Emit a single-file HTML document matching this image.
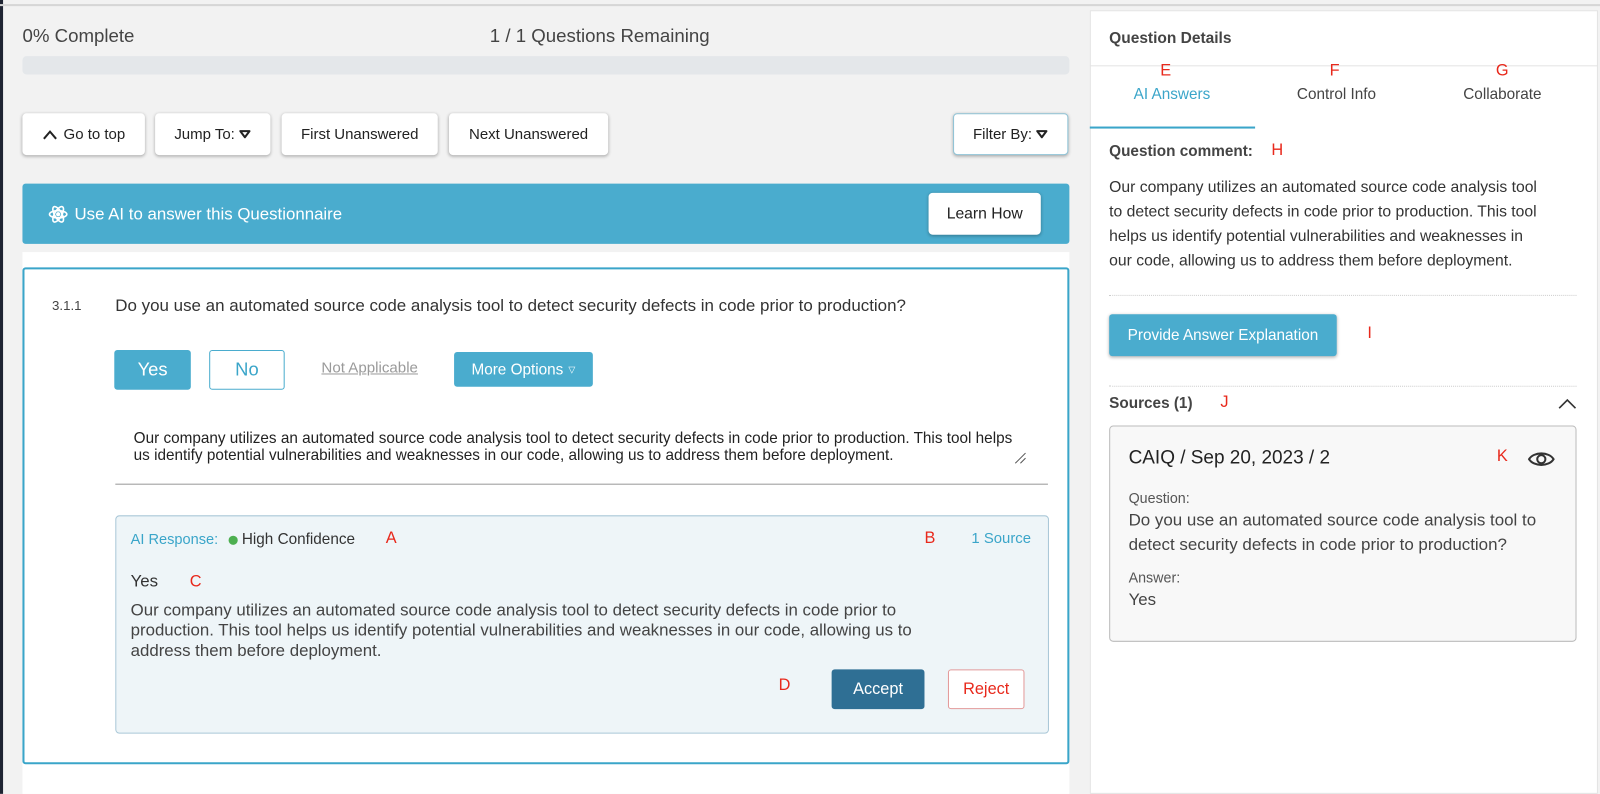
<!DOCTYPE html>
<html><head><meta charset="utf-8"><style>
*{box-sizing:border-box;margin:0;padding:0}
body{width:1600px;height:778px;background:#f2f2f2;font-family:"Liberation Sans",Arial,sans-serif;color:#333;position:relative;overflow:hidden}
#w{position:absolute;left:0;top:0;width:1568px;height:763px;transform:scale(1.0204);transform-origin:0 0}
.a{position:absolute;white-space:nowrap}
.btn{position:absolute;background:#fff;border-radius:4px;box-shadow:0 1px 3px rgba(0,0,0,.3);font-size:14.7px;color:#222;display:flex;align-items:center;justify-content:center}
.red{color:#e8291c;position:absolute;font-size:16px}
</style></head><body>
<div id="w">
<div class="a" style="left:0;top:0;width:3px;height:778px;background:#1f2533"></div>
<div class="a" style="left:0;top:4px;width:1600px;height:2px;background:#d6d6d6"></div>

<div class="a" style="left:22px;top:24px;font-size:18.3px;color:#444">0% Complete</div>
<div class="a" style="left:480px;top:24px;font-size:18.3px;color:#444">1 / 1 Questions Remaining</div>
<div class="a" style="left:22px;top:55px;width:1026px;height:18px;background:#e4e7ea;border-radius:4px"></div>

<div class="btn" style="left:22px;top:111px;width:120px;height:41px"><svg width="16" height="12" viewBox="0 0 16 12" style="margin-right:5px"><path d="M2 10 L8 3 L14 10" fill="none" stroke="#222" stroke-width="2"/></svg>Go to top</div>
<div class="btn" style="left:152px;top:111px;width:113px;height:41px">Jump To:<svg width="12" height="9" viewBox="0 0 12 9" style="margin-left:4px"><path d="M1.5 1.5 H10.5 L6 7.5Z" fill="none" stroke="#222" stroke-width="2" stroke-linejoin="round"/></svg></div>
<div class="btn" style="left:276px;top:111px;width:153px;height:41px">First Unanswered</div>
<div class="btn" style="left:440px;top:111px;width:156px;height:41px">Next Unanswered</div>
<div class="btn" style="left:934px;top:111px;width:113px;height:41px;border:1px solid #8fc3d6">Filter By:<svg width="12" height="9" viewBox="0 0 12 9" style="margin-left:4px"><path d="M1.5 1.5 H10.5 L6 7.5Z" fill="none" stroke="#222" stroke-width="2" stroke-linejoin="round"/></svg></div>

<div class="a" style="left:22px;top:180px;width:1026px;height:59px;background:#4aacce;border-radius:3px"></div>
<svg class="a" style="left:47px;top:200px" width="20" height="20" viewBox="0 0 20 20" fill="none" stroke="#fff" stroke-width="1.6"><ellipse cx="10" cy="10" rx="8.5" ry="3.5"/><ellipse cx="10" cy="10" rx="8.5" ry="3.5" transform="rotate(60 10 10)"/><ellipse cx="10" cy="10" rx="8.5" ry="3.5" transform="rotate(120 10 10)"/><circle cx="10" cy="10" r="1.3" fill="#fff"/></svg>
<div class="a" style="left:73px;top:201px;font-size:16.5px;color:#fff">Use AI to answer this Questionnaire</div>
<div class="btn" style="left:910px;top:189px;width:110px;height:41px;font-size:15.4px">Learn How</div>

<div class="a" style="left:22px;top:247px;width:1026px;height:531px;background:#fff"></div>
<div class="a" style="left:22px;top:262px;width:1026px;height:487px;border:2px solid #3aa5c9;border-radius:3px;background:#fff"></div>
<div class="a" style="left:51px;top:292px;font-size:13px;color:#444">3.1.1</div>
<div class="a" style="left:113px;top:290px;font-size:16.6px;color:#333">Do you use an automated source code analysis tool to detect security defects in code prior to production?</div>

<div class="a" style="left:112px;top:343px;width:75px;height:39px;background:#4aacce;border-radius:3px;color:#fff;font-size:18px;display:flex;align-items:center;justify-content:center">Yes</div>
<div class="a" style="left:205px;top:343px;width:74px;height:39px;border:1px solid #4aacce;border-radius:3px;color:#3aa5c9;font-size:18px;display:flex;align-items:center;justify-content:center">No</div>
<div class="a" style="left:315px;top:353px;font-size:14.8px;color:#9a9a9a;text-decoration:underline">Not Applicable</div>
<div class="a" style="left:445px;top:345px;width:136px;height:34px;background:#4aacce;border-radius:3px;color:#fff;font-size:15px;display:flex;align-items:center;justify-content:center">More Options <span style="font-size:9px;margin-left:5px">▽</span></div>

<div class="a" style="left:131px;top:421px;font-size:15px;color:#222;line-height:17px">Our company utilizes an automated source code analysis tool to detect security defects in code prior to production. This tool helps<br>us identify potential vulnerabilities and weaknesses in our code, allowing us to address them before deployment.</div>
<svg class="a" style="left:994px;top:443px" width="12" height="12"><path d="M1 11 L11 1 M6 11 L11 6" stroke="#555" stroke-width="1"/></svg>
<div class="a" style="left:113px;top:474px;width:914px;height:1px;background:#999"></div>

<div class="a" style="left:113px;top:505px;width:915px;height:214px;background:#eef5f8;border:1px solid #a9c7d7;border-radius:4px"></div>
<div class="a" style="left:128px;top:521px;font-size:14.3px;color:#3aa5c9">AI Response:</div>
<div class="a" style="left:224px;top:525px;width:9px;height:9px;border-radius:50%;background:#4caf50"></div>
<div class="a" style="left:237px;top:520px;font-size:15px;color:#333">High Confidence</div>
<div class="red" style="left:378px;top:519px">A</div>
<div class="red" style="left:906px;top:519px">B</div>
<div class="a" style="left:952px;top:520px;font-size:14.6px;color:#3aa5c9">1 Source</div>
<div class="a" style="left:128px;top:561px;font-size:16.5px;color:#333">Yes</div>
<div class="red" style="left:186px;top:562px">C</div>
<div class="a" style="left:128px;top:588px;font-size:16.5px;color:#444;line-height:20px">Our company utilizes an automated source code analysis tool to detect security defects in code prior to<br>production. This tool helps us identify potential vulnerabilities and weaknesses in our code, allowing us to<br>address them before deployment.</div>
<div class="red" style="left:763px;top:663px">D</div>
<div class="a" style="left:815px;top:656px;width:91px;height:39px;background:#2f6f94;border-radius:3px;color:#fff;font-size:16px;display:flex;align-items:center;justify-content:center">Accept</div>
<div class="a" style="left:929px;top:656px;width:75px;height:39px;background:#fff;border:1px solid #e39a9a;border-radius:3px;color:#e8291c;font-size:16px;display:flex;align-items:center;justify-content:center">Reject</div>

<div class="a" style="left:1068px;top:10px;width:498px;height:768px;background:#fff;border:1px solid #e3e3e3"></div>
<div class="a" style="left:1087px;top:29px;font-size:15.2px;font-weight:bold;color:#444">Question Details</div>
<div class="a" style="left:1068px;top:64px;width:498px;height:1px;background:#e3e3e3"></div>
<div class="red" style="left:1137px;top:61px">E</div>
<div class="red" style="left:1303px;top:61px">F</div>
<div class="red" style="left:1466px;top:61px">G</div>
<div class="a" style="left:1111px;top:84px;font-size:15px;color:#3aa5c9">AI Answers</div>
<div class="a" style="left:1271px;top:84px;font-size:15px;color:#444">Control Info</div>
<div class="a" style="left:1434px;top:84px;font-size:15px;color:#444">Collaborate</div>
<div class="a" style="left:1068px;top:124px;width:162px;height:2px;background:#3aa5c9"></div>
<div class="a" style="left:1087px;top:140px;font-size:15px;font-weight:bold;color:#444">Question comment:</div>
<div class="red" style="left:1246px;top:139px">H</div>
<div class="a" style="left:1087px;top:172px;font-size:15.4px;color:#333;line-height:24px">Our company utilizes an automated source code analysis tool<br>to detect security defects in code prior to production. This tool<br>helps us identify potential vulnerabilities and weaknesses in<br>our code, allowing us to address them before deployment.</div>
<div class="a" style="left:1087px;top:289px;width:458px;border-top:1px dotted #ccc"></div>
<div class="a" style="left:1087px;top:308px;width:223px;height:41px;background:#4aacce;border-radius:3px;box-shadow:0 1px 3px rgba(0,0,0,.3);color:#fff;font-size:15px;display:flex;align-items:center;justify-content:center">Provide Answer Explanation</div>
<div class="red" style="left:1340px;top:318px">I</div>
<div class="a" style="left:1087px;top:378px;width:458px;border-top:1px dotted #ccc"></div>
<div class="a" style="left:1087px;top:387px;font-size:15px;font-weight:bold;color:#444">Sources (1)</div>
<div class="red" style="left:1196px;top:386px">J</div>
<svg class="a" style="left:1526px;top:390px" width="20" height="12"><path d="M2 10 L10 2 L18 10" fill="none" stroke="#333" stroke-width="1.6"/></svg>
<div class="a" style="left:1087px;top:417px;width:458px;height:212px;background:#f8f8f8;border:1px solid #bbb;border-radius:4px"></div>
<div class="a" style="left:1106px;top:437px;font-size:18.6px;color:#222">CAIQ / Sep 20, 2023 / 2</div>
<div class="red" style="left:1467px;top:439px">K</div>
<svg class="a" style="left:1497px;top:440px" width="27" height="20" viewBox="0 0 27 20"><path d="M1.5 10 C6 2.5 21 2.5 25.5 10 C21 17.5 6 17.5 1.5 10Z" fill="none" stroke="#333" stroke-width="2"/><circle cx="13.5" cy="10" r="4" fill="none" stroke="#333" stroke-width="2"/></svg>
<div class="a" style="left:1106px;top:480px;font-size:14px;color:#555">Question:</div>
<div class="a" style="left:1106px;top:498px;font-size:16.6px;color:#444;line-height:24px">Do you use an automated source code analysis tool to<br>detect security defects in code prior to production?</div>
<div class="a" style="left:1106px;top:558px;font-size:14px;color:#555">Answer:</div>
<div class="a" style="left:1106px;top:579px;font-size:16.5px;color:#444">Yes</div>
</div>
</body></html>
